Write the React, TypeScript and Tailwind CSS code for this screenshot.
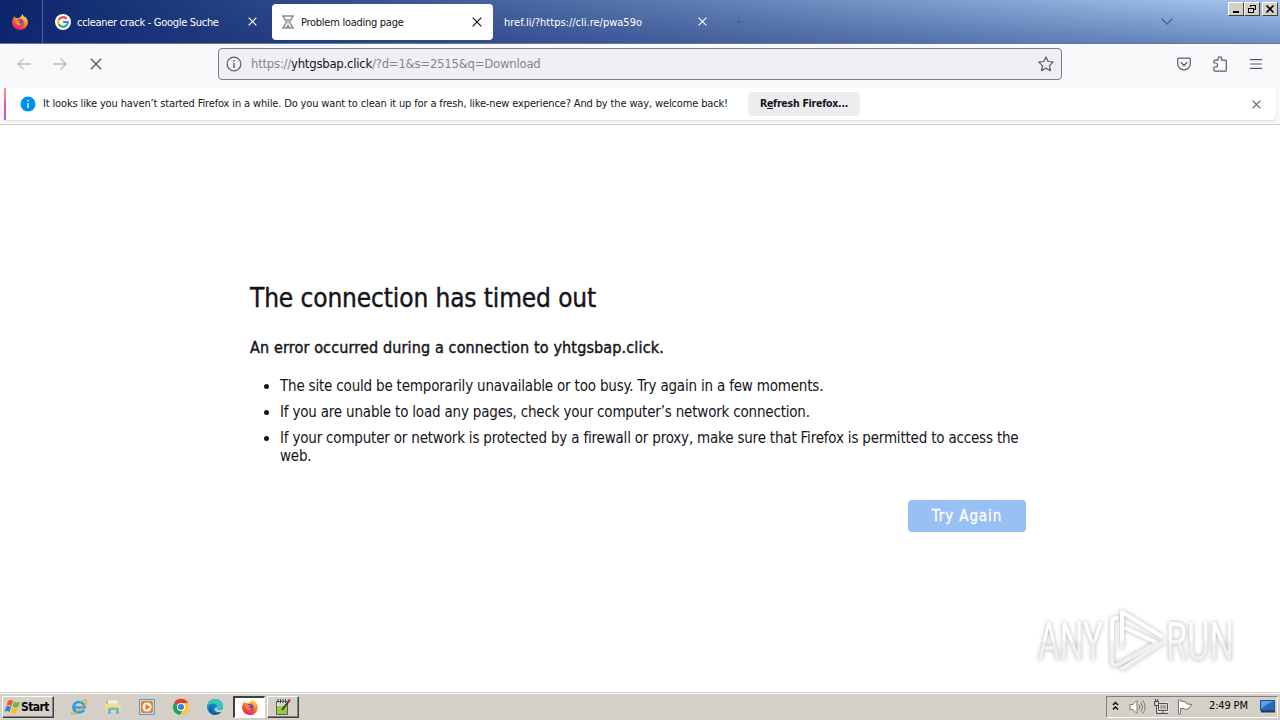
import type { ReactNode } from 'react';

const FirefoxLogo = ({ id, className }: { id: string; className: string }) => (
  <svg viewBox="0 0 16 16" className={className}>
    <defs>
      <linearGradient id={id} x1="0.8" y1="0" x2="0.3" y2="1">
        <stop offset="0" stopColor="#ffe14a" />
        <stop offset="0.4" stopColor="#ff9a1f" />
        <stop offset="0.7" stopColor="#fb4b35" />
        <stop offset="1" stopColor="#e31587" />
      </linearGradient>
    </defs>
    <path d="M2.6 2.6 4 4.2c.8-.3 1.6-.2 2.3 0L9.4 2.3C9.6 1.2 10 .5 10.7 0c.1 1.5 1 2.1 1.9 2.9l.6-.2c1.6 1.6 2.7 3.5 2.7 5.6C15.9 12.7 12.5 16 8 16S.1 12.6.1 8.3C.1 6.6.7 5.1 1.6 4c0-.6.4-1.1 1-1.4Z" fill={`url(#${id})`} />
    <circle cx="8" cy="8.6" r="3.5" fill="#7a3fd0" />
    <path d="M3.5 6.5c1-.8 2.3-.7 3 .1h2c-.1.8-.9 1.2-1.7 1.5.1 1.5 2.1 2 3.6 1-.5 2-2.500 3-4.500 2.200-2-.8-3-2.800-2.400-4.800Z" fill="#ff8a16" />
  </svg>
);

const GoogleLogo = () => (
  <svg viewBox="0 0 16 16" className="h-4 w-4" fill="none" strokeWidth="2.2">
    <circle cx="8" cy="8" r="8" fill="#fff" />
    <path d="M11.600 4.800A4.800 4.800 0 0 0 3.800 5.700" stroke="#ea4335" />
    <path d="M3.800 5.700a4.800 4.800 0 0 0 0 4.600" stroke="#fbbc05" />
    <path d="M3.800 10.300a4.800 4.800 0 0 0 7.300 1.300" stroke="#34a853" />
    <path d="M11.100 11.600A4.600 4.600 0 0 0 12.700 8H8" stroke="#4285f4" />
  </svg>
);

const Cross = ({ className }: { className: string }) => (
  <svg viewBox="0 0 10 10" className={className} fill="none" stroke="currentColor" strokeWidth="1.2">
    <path d="m.7.700 8.600 8.600M9.300.700.700 9.300" />
  </svg>
);

const WindowButton = ({ children }: { children: ReactNode }) => (
  <div className="flex h-[14px] w-4 items-center justify-center border border-t-white border-r-[#404040] border-b-[#404040] border-l-white bg-[#d4d0c8]">
    <svg viewBox="0 0 12 10" className="h-[10px] w-3" fill="none" stroke="#000" shapeRendering="crispEdges">
      {children}
    </svg>
  </div>
);

const TabStrip = () => (
  <header className="flex h-11 border-b border-[#66779b] bg-[linear-gradient(to_bottom,rgba(30,50,130,0)_0%,rgba(20,40,120,0.38)_100%),linear-gradient(to_right,#0a246a,#a6caf0)] text-[11px] text-white">
    <div className="flex w-[43px] items-center justify-center border-r border-[#4b629a] pr-[3px]">
      <FirefoxLogo id="fx-tab" className="h-4 w-4" />
    </div>
    <div className="flex w-[229px] items-center pl-3">
      <GoogleLogo />
      <span className="ml-[6px] flex-1 pt-1 whitespace-nowrap tracking-[-0.3px]">ccleaner crack - Google Suche</span>
      <Cross className="mr-[15px] h-[9px] w-[9px]" />
    </div>
    <div className="mt-1 flex h-9 w-[221px] items-center rounded bg-white pl-[10px] text-[#15141a]">
      <svg viewBox="0 0 12 14" className="h-[14px] w-3" fill="none" stroke="#8f8f94" strokeWidth="1.5">
        <path d="M0 1h12M0 13h12M2 1v2.500L5 7l-3 3.500V13M10 1v2.500L7 7l3 3.500V13" />
        <path d="M4 4h4L6 6zM3.500 12.500 6 9l2.500 3.500z" fill="#8f8f94" stroke="none" />
      </svg>
      <span className="ml-[7px] flex-1 pt-[3px] whitespace-nowrap tracking-[-0.27px]">Problem loading page</span>
      <Cross className="mr-[11px] h-[10px] w-[10px]" />
    </div>
    <div className="flex w-[225px] items-center pl-[11px]">
      <span className="flex-1 pt-1 whitespace-nowrap">href.li/?https://cli.re/pwa59o</span>
      <Cross className="mr-[11px] h-[9px] w-[9px]" />
    </div>
    <svg viewBox="0 0 10 10" className="mt-[17px] ml-4 h-[10px] w-[10px]" stroke="#4d6087">
      <path d="M5 0v10M0 5h10" />
    </svg>
    <svg viewBox="0 0 12 7" className="mt-[18px] ml-[417px] h-[7px] w-3" fill="none" stroke="#496492" strokeWidth="1.3">
      <path d="m.7.700 5.300 5.300L11.300.700" />
    </svg>
    <div className="mt-[2px] ml-auto flex pr-[2px]">
      <WindowButton><path d="M3 8h6" strokeWidth="2" /></WindowButton>
      <WindowButton>
        <path d="M4.500 3V1.500h5v4H8M4 1.500h6M2.500 4.500h5v4h-5zM2 4.500h6" strokeWidth="1.3" />
      </WindowButton>
      <div className="ml-[2px]">
        <WindowButton><path d="m2.500 1.500 7 7M9.500 1.500l-7 7" strokeWidth="1.7" shapeRendering="auto" /></WindowButton>
      </div>
    </div>
  </header>
);

const Toolbar = () => (
  <div className="flex h-11 items-center bg-[#f9f9fb] pb-1 text-[#5b5b66]">
    <svg viewBox="0 0 14 12" className="ml-[17px] h-3 w-[14px]" fill="none" stroke="#bcbcc2" strokeWidth="1.3">
      <path d="M14 6H1M6.500.500 1 6l5.500 5.500" />
    </svg>
    <svg viewBox="0 0 14 12" className="ml-[22px] h-3 w-[14px]" fill="none" stroke="#bcbcc2" strokeWidth="1.3">
      <path d="M0 6h13M7.500.500 13 6l-5.500 5.500" />
    </svg>
    <Cross className="ml-[23px] h-3 w-3" />
    <div className="ml-[116px] flex h-8 w-[844px] items-center rounded border border-[#7c7c86] bg-[#f0f0f4] px-[7px]">
      <svg viewBox="0 0 16 16" className="h-4 w-4" fill="none" stroke="currentColor" strokeWidth="1.2">
        <circle cx="8" cy="8" r="6.900" />
        <path d="M8 7v5M8 4v1.500" strokeWidth="1.4" />
      </svg>
      <span className="ml-[9px] flex-1 whitespace-nowrap text-[13px] tracking-[-0.24px] text-[#85858c]">
        https://<span className="text-[#15141a]">yhtgsbap.click</span>/?d=1&amp;s=2515&amp;q=Download
      </span>
      <svg viewBox="0 0 16 16" className="h-4 w-4" fill="none" stroke="currentColor" strokeWidth="1.2" strokeLinejoin="round">
        <path d="m8 .9 2.100 4.600 5.100.6-3.700 3.500.9 5L8 12.200l-4.400 2.400.9-5L.8 6.100l5.100-.6z" />
      </svg>
    </div>
    <svg viewBox="0 0 14 14" className="ml-[115px] h-[14px] w-[14px]" fill="none" stroke="currentColor" strokeWidth="1.2" strokeLinecap="round" strokeLinejoin="round">
      <path d="M2 1.200h10q1.300 0 1.300 1.300V6.500a6.300 6.300 0 0 1-12.600 0v-4Q.7 1.200 2 1.200ZM4 5.500l3 3 3-3" />
    </svg>
    <svg viewBox="0 0 14 16" className="ml-[22px] h-4 w-[14px]" fill="none" stroke="currentColor" strokeWidth="1.2" strokeLinejoin="round">
      <path d="M1 7V5.200q0-1 1-1h3V2.600a1.800 1.800 0 0 1 3.600 0v1.600h3.700q1 0 1 1v9q0 1-1 1H2q-1 0-1-1V11h1.600a1.900 1.900 0 0 0 0-4z" />
    </svg>
    <svg viewBox="0 0 12 10" className="ml-[23px] h-[10px] w-3" stroke="currentColor" strokeWidth="1.2">
      <path d="M0 .6h12M0 5h12M0 9.400h12" />
    </svg>
  </div>
);

const NotificationBar = () => (
  <div className="h-[37px] border-b border-[#ccccd0] bg-[#f9f9fb] pr-1 pl-1">
    <div className="flex h-8 items-center rounded-r bg-white text-[11px] text-[#15141a] shadow-[0_1px_2px_#d8d8dc]">
      <div className="h-8 w-[2px] bg-linear-to-b from-[#ff9a62] via-[#e455a2] to-[#a35be8]" />
      <svg viewBox="0 0 16 16" className="ml-[14px] h-4 w-4">
        <circle cx="8" cy="8" r="7.500" fill="#0090ed" />
        <path d="M8 7v5M8 4v1.500" stroke="#fff" strokeWidth="1.3" />
      </svg>
      <span className="ml-[7px] w-[705px] whitespace-nowrap tracking-[-0.142px]">
        It looks like you haven’t started Firefox in a while. Do you want to clean it up for a fresh, like-new experience? And by the way, welcome back!
      </span>
      <button className="h-6 w-28 rounded bg-[#ededf0] text-[10.5px] font-bold tracking-[-0.25px]">
        R<span className="underline">e</span>fresh Firefox...
      </button>
      <Cross className="mr-[15px] ml-auto h-[9px] w-[9px] text-[#5b5b66]" />
    </div>
  </div>
);

const Watermark = () => (
  <svg viewBox="0 0 210 76" className="absolute top-[478px] left-[1030px] h-[76px] w-[210px] overflow-visible drop-shadow-[0_0_2px_rgba(0,0,0,0.3)]">
    <defs>
      <linearGradient id="mark" x1="0" y1="0" x2="0" y2="76" gradientUnits="userSpaceOnUse">
        <stop offset="0.48" stopColor="#fff" />
        <stop offset="0.52" stopColor="#f0f0f0" />
      </linearGradient>
    </defs>
    <g fill="url(#mark)" fontFamily="Roboto, sans-serif" fontSize="53">
      <text x="8" y="57" textLength="65" lengthAdjust="spacingAndGlyphs">ANY</text>
      <text x="136" y="57" textLength="68" lengthAdjust="spacingAndGlyphs">RUN</text>
    </g>
    <g fill="none" stroke="url(#mark)" strokeWidth="4" strokeLinecap="round" strokeLinejoin="round">
      <path d="M92 44V9l39 24" />
      <path d="m96 25 31 15-38 21q-7 3-7-2V19q0-4 5-4" />
      <path d="m92 66 40-26" />
    </g>
  </svg>
);

const ErrorPage = () => (
  <main className="relative h-[567px] bg-white pt-[154px] pl-[250px] text-[#15141a]">
    <h1 className="h-[38px] text-[26px] leading-[38px] whitespace-nowrap tracking-[-0.12px] [-webkit-text-stroke:0.4px]">The connection has timed out</h1>
    <h2 className="mt-[21px] h-5 text-base leading-5 whitespace-nowrap tracking-[0.14px] [-webkit-text-stroke:0.4px]">
      An error occurred during a connection to yhtgsbap.click.
    </h2>
    <ul className="mt-[19px] w-[776px] list-disc space-y-2 pl-[30px] text-[15px] leading-[18px] tracking-[-0.19px]">
      <li>The site could be temporarily unavailable or too busy. Try again in a few moments.</li>
      <li>If you are unable to load any pages, check your computer’s network connection.</li>
      <li>
        If your computer or network is protected by a firewall or proxy, make sure that Firefox is permitted to access the
        <br />
        web.
      </li>
    </ul>
    <div className="mt-[35px] flex w-[776px] justify-end">
      <button className="h-8 w-[118px] rounded bg-[#99c0f5] text-[15px] tracking-[0.9px] text-white [-webkit-text-stroke:0.3px]">Try Again</button>
    </div>
    <Watermark />
  </main>
);

const Taskbar = () => (
  <footer className="flex h-7 items-center border-t border-[#d4d0c8] bg-[#d4d0c8] pl-[2px] text-[11px] text-black shadow-[inset_0_1px_0_#fff]">
    <div className="flex h-[22px] w-[52px] items-center border border-t-white border-r-[#404040] border-b-[#404040] border-l-white pl-[1px] font-bold shadow-[inset_-1px_-1px_0_#808080]">
      <svg viewBox="0 0 17 16" className="h-4 w-[17px] shrink-0">
        <path d="M4 2q3-2 5 0L7.500 7q-2.500-2-5 0z" fill="#ee5a22" />
        <path d="M10 2.500q3 2 6 0l-1.500 5q-3 2-6 0z" fill="#72b735" />
        <path d="M2 8q3-2 5 0l-1.500 5q-2.500-2-5 0z" fill="#2d83d0" />
        <path d="M8 8.500q3 2 6 0l-1.500 5q-3 2-6 0z" fill="#fbbc20" />
      </svg>
      <span className="text-xs tracking-[-0.6px]">Start</span>
    </div>
    <svg viewBox="0 0 18 18" className="ml-4 h-[18px] w-[18px]" fill="none">
      <path d="M3.500 9.500h11Q14 4 9 4t-5.500 5.500q.5 5 5.500 5 3 0 5-2.500" stroke="#2c9de0" strokeWidth="2.7" />
      <path d="M2 14q-2 4 3 1Q12 11 16 5q2-4-2-3l-4 1.500" stroke="#dfa931" strokeWidth="1.2" />
    </svg>
    <svg viewBox="0 0 18 18" className="ml-4 h-[18px] w-[18px]">
      <path d="M2 3h6l1 1.500h6V14H2z" fill="#d9ad50" />
      <path d="M4 2.500h10V9H4z" fill="#eaf3e6" />
      <path d="M1 5.500h15L17 14H2z" fill="#f5dc87" />
      <path d="M4 16v-5q0-1.500 2-1.500h7q2 0 2 1.500v5h-3v-4H7v4z" fill="#67b8df" />
    </svg>
    <svg viewBox="0 0 18 18" className="ml-4 h-[18px] w-[18px]">
      <path d="M1.500 1.500h15v15h-15z" fill="#b7dcef" stroke="#5e9dbf" />
      <rect x="3" y="3" width="12" height="12" rx="2" fill="#f48120" />
      <circle cx="9" cy="9" r="4.500" fill="#fff" />
      <path d="M7.500 6v6l5-3z" fill="#ee7115" />
    </svg>
    <svg viewBox="0 0 18 18" className="ml-4 h-[18px] w-[18px]">
      <path d="M9 9 2 5a8 8 0 0 1 14 0z" fill="#e33b2e" />
      <path d="M2 5a8 8 0 0 0 6 12l4-7-3-1z" fill="#22a455" />
      <path d="M16 5a8 8 0 0 1-8 12l4-7-3-5z" fill="#fcc934" />
      <circle cx="9" cy="9" r="4" fill="#fff" />
      <circle cx="9" cy="9" r="3" fill="#357de8" />
    </svg>
    <svg viewBox="0 0 18 18" className="ml-4 h-[18px] w-[18px]">
      <circle cx="9" cy="9" r="8" fill="#1383ce" />
      <path d="M1.200 8C2 3 5 1 9 1c5 0 8 3.500 8 7 0 3-2.500 4-5 4-3 0-1-1-1-3.500C11 5 5 4 1.200 8Z" fill="#35c9b4" />
      <path d="M6 8.500C5 13 9 16 15.500 13.500 12 18 4 18 3 12q-.5-3 3-3.500Z" fill="#155da9" />
      <path d="M11 9q-1.500 3 2 3.200 2.500 0 4-1.700l-.5 3q-5 2-7.500-1Q8 10 11 9Z" fill="#d4d0c8" />
    </svg>
    <div className="ml-[9px] flex h-[22px] w-8 items-center justify-center border-t-2 border-r border-b border-l-2 border-t-[#404040] border-r-white border-b-white border-l-[#404040] bg-white">
      <FirefoxLogo id="fx-task" className="h-4 w-4" />
    </div>
    <div className="ml-[2px] flex h-[22px] w-8 items-center justify-center border border-t-white border-r-[#404040] border-b-[#404040] border-l-white shadow-[inset_-1px_-1px_0_#808080]">
      <svg viewBox="0 0 18 18" className="h-[18px] w-[18px]">
        <path d="M2.500 3.500h11v13h-11z" fill="#f4faed" stroke="#58635a" />
        <path d="M3 8q5-1 10 0v8H3z" fill="#9acb37" />
        <path d="M4 6h8" stroke="#9caaa0" />
        <path d="M4 1v4M6.500 1v4M9 1v4M11.500 1v4" stroke="#444" />
        <path d="m8 12 7-9" stroke="#393939" strokeWidth="2" />
        <path d="m14.500 3.500 1.500-2" stroke="#cf4228" strokeWidth="2.5" />
      </svg>
    </div>
    <div className="mr-[2px] ml-auto flex h-[22px] w-[172px] items-center border border-t-[#808080] border-r-white border-b-white border-l-[#808080]">
      <svg viewBox="0 0 7 10" className="mb-[2px] ml-[5px] h-[10px] w-[7px]" fill="none" stroke="#000" strokeWidth="1.4">
        <path d="m1 4 2.500-2.500L6 4M1 8.500 3.500 6 6 8.500" />
      </svg>
      <svg viewBox="0 0 17 16" className="ml-[10px] h-4 w-[17px]" fill="none" stroke="#7a7a7a">
        <path d="M1 5.500h3l4-4v13l-4-4H1z" fill="#fff" />
        <path d="M10 5.500q1.500 2.500 0 5M12 3.500q3 4.500 0 9M14 1.500q4 6.500 0 13" />
      </svg>
      <svg viewBox="0 0 16 16" className="ml-[7px] h-4 w-4" fill="none" stroke="#4f4f4f">
        <path d="M5.500 4.500h9v7h-9z" fill="#aaa" stroke="#fff" strokeWidth="2" />
        <path d="M5.500 4.500h9v7h-9zM10 12v2M6 14.500h9M1.500 2.500h4v4h-4zM2.500 0v2M4.500 0v2M3.500 7v7.500H7" />
      </svg>
      <svg viewBox="0 0 16 16" className="ml-2 h-4 w-4" fill="#fff" stroke="#747474">
        <path d="M1.500 1v14h2V9.500h4l1.500 1 2-.5 4-4.500-5-.5-1-2-5.500-1V1z" />
      </svg>
      <span className="ml-4 w-[40px] whitespace-nowrap tracking-[-0.15px]">2:49 PM</span>
      <svg viewBox="0 0 15 13" className="ml-[11px] h-[13px] w-[15px]">
        <path d="M.5.5h14v10H.5z" fill="#266bc1" stroke="#185195" />
        <path d="M1 1h13Q8 3 1 9z" fill="#5aa0e3" />
        <path d="M1 11.500h14" stroke="#263b58" strokeWidth="2" />
      </svg>
    </div>
  </footer>
);

export default function App() {
  return (
    <div className="h-[720px] w-[1280px] overflow-hidden bg-white font-['DejaVu_Sans_Condensed','DejaVu_Sans',sans-serif]">
      <TabStrip />
      <Toolbar />
      <NotificationBar />
      <ErrorPage />
      <Taskbar />
    </div>
  );
}
